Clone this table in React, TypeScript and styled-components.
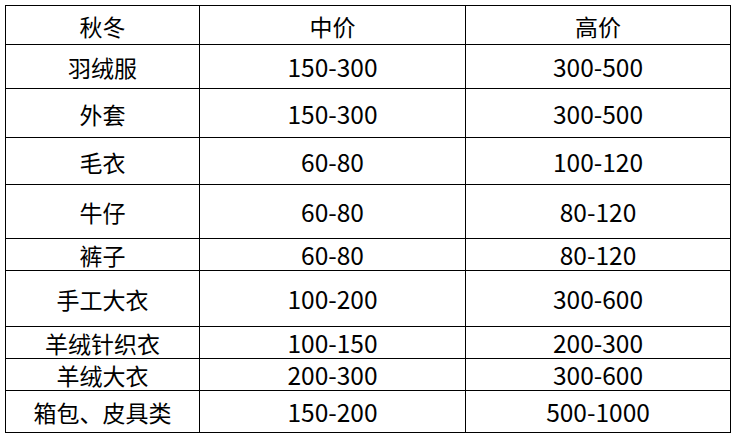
import { Fragment } from 'react'
import styled, { createGlobalStyle } from 'styled-components'

const GlobalStyle = createGlobalStyle`
  html, body {
    margin: 0;
    padding: 0;
    background: #ffffff;
  }
`

const rows: { name: string; mid: string; high: string; h: number }[] = [
  { name: '秋冬', mid: '中价', high: '高价', h: 38 },
  { name: '羽绒服', mid: '150-300', high: '300-500', h: 43 },
  { name: '外套', mid: '150-300', high: '300-500', h: 48 },
  { name: '毛衣', mid: '60-80', high: '100-120', h: 46 },
  { name: '牛仔', mid: '60-80', high: '80-120', h: 53 },
  { name: '裤子', mid: '60-80', high: '80-120', h: 31 },
  { name: '手工大衣', mid: '100-200', high: '300-600', h: 55 },
  { name: '羊绒针织衣', mid: '100-150', high: '200-300', h: 31 },
  { name: '羊绒大衣', mid: '200-300', high: '300-600', h: 31 },
  { name: '箱包、皮具类', mid: '150-200', high: '500-1000', h: 41 },
]

const isNum = (s: string) => /^[\d-]+$/.test(s)

export default function App() {
  return (
    <>
      <GlobalStyle />
      <Page>
        <PriceTable $rows={rows.map(r => `${r.h}px`).join(' ')}>
          {rows.map(r => (
            <Fragment key={r.name}>
              <Cell>{r.name}</Cell>
              <Cell $num={isNum(r.mid)}>{r.mid}</Cell>
              <Cell $num={isNum(r.high)}>{r.high}</Cell>
            </Fragment>
          ))}
        </PriceTable>
      </Page>
    </>
  )
}

const Page = styled.main`
  padding: 5px 0 0 5px;
  width: 733px;
  height: 435px;
  box-sizing: border-box;
`

const PriceTable = styled.div<{ $rows: string }>`
  display: grid;
  grid-template-columns: 193px 265px 264px;
  grid-template-rows: ${p => p.$rows};
  gap: 1px;
  padding: 1px;
  width: max-content;
  background: #000000;
`

const Cell = styled.div<{ $num?: boolean }>`
  display: flex;
  align-items: center;
  justify-content: center;
  padding-top: ${p => (p.$num ? '2px' : '2px')};
  box-sizing: border-box;
  background: #ffffff;
  color: #000000;
  font-family: 'Noto Sans CJK SC', 'Noto Sans', sans-serif;
  font-size: ${p => (p.$num ? '24.5px' : '23px')};
  line-height: 1;
  white-space: nowrap;
`
